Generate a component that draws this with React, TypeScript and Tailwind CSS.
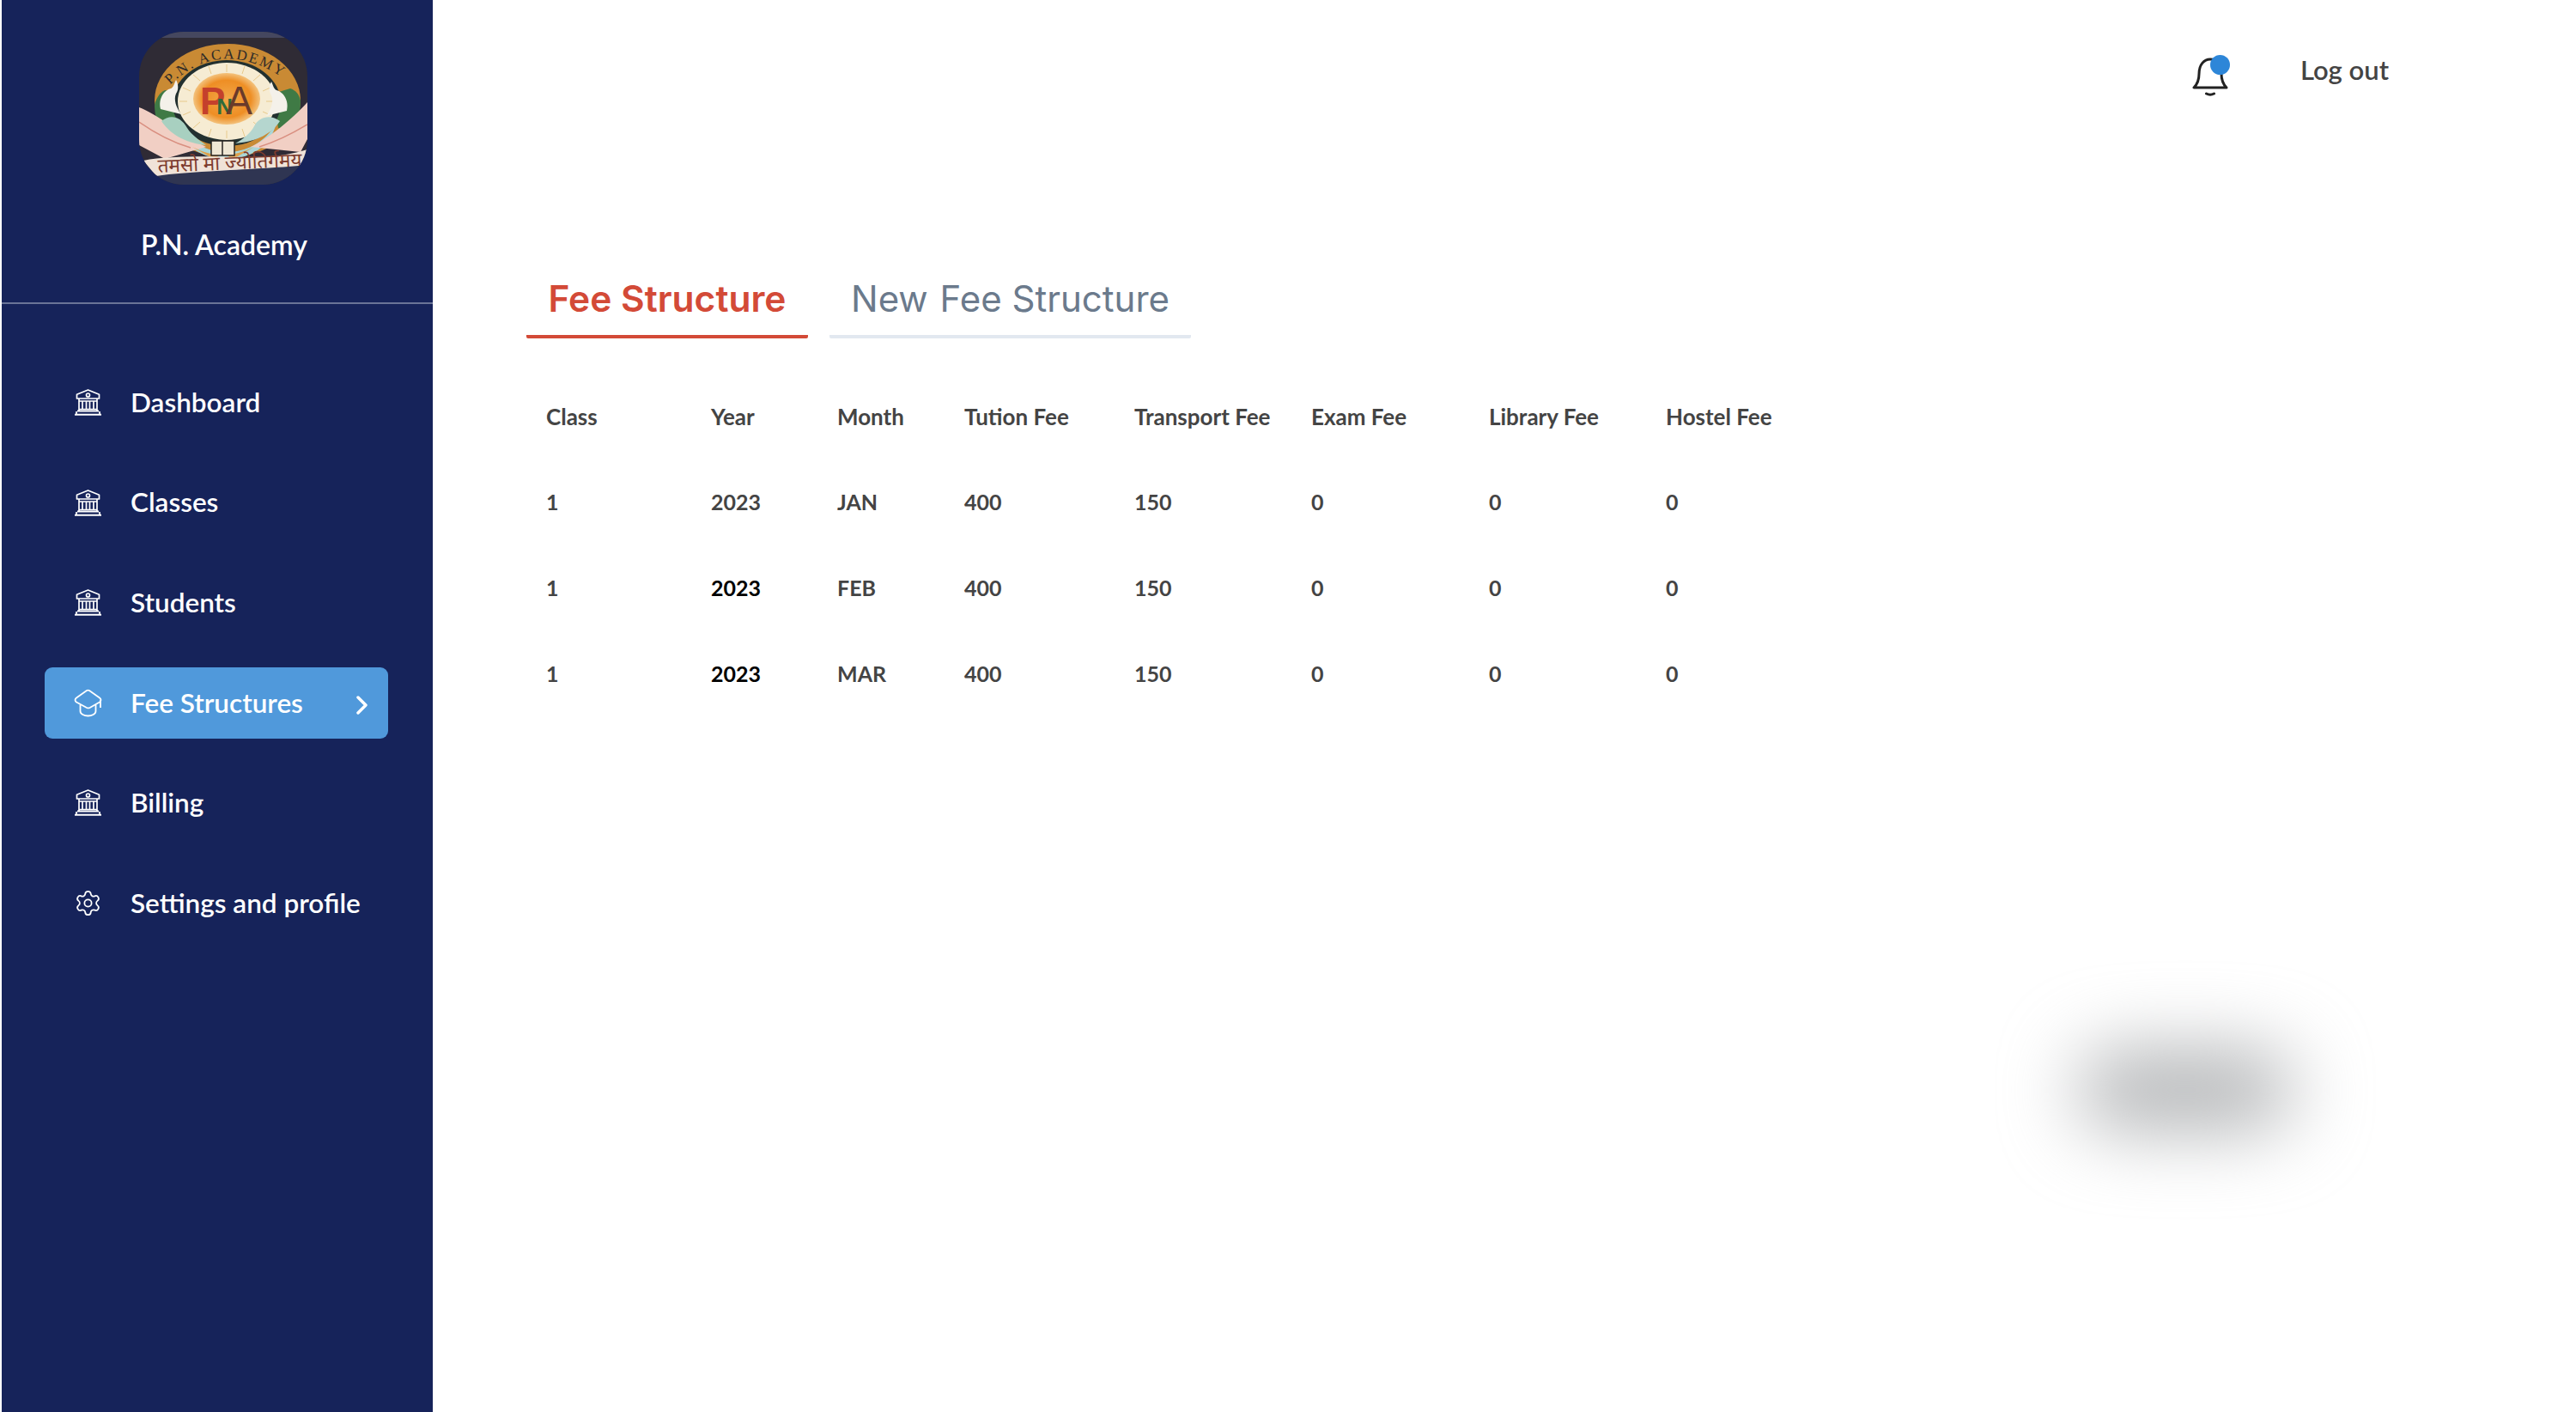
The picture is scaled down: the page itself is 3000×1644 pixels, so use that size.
import { Settings } from "lucide-react";

const navItems = [
  { label: "Dashboard", icon: "bank" },
  { label: "Classes", icon: "bank" },
  { label: "Students", icon: "bank" },
  { label: "Fee Structures", icon: "cap", active: true },
  { label: "Billing", icon: "bank" },
  { label: "Settings and profile", icon: "gear" },
];

const columns = ["Class", "Year", "Month", "Tution Fee", "Transport Fee", "Exam Fee", "Library Fee", "Hostel Fee"];

const rows = [
  ["1", "2023", "JAN", "400", "150", "0", "0", "0"],
  ["1", "2023", "FEB", "400", "150", "0", "0", "0"],
  ["1", "2023", "MAR", "400", "150", "0", "0", "0"],
];

function BankIcon() {
  return (
    <svg width="33" height="31" viewBox="0 0 33 31" fill="none" stroke="white" strokeWidth="1.7" className="shrink-0">
      <path d="M3.5 11V6.2L16.5 1l13 5.2V11z" strokeLinejoin="round" />
      <circle cx="16.5" cy="7" r="2" />
      <path d="M6 11v14M10 14v9M14.5 14v9M18.5 14v9M23 14v9M27 11v14M6 14h21M6 23.5h21" />
      <path d="M4 25.5h25M1 29.8h31" strokeWidth="2" />
      <path d="M3 26v3M30 26v3" />
    </svg>
  );
}

function CapIcon() {
  return (
    <svg width="33" height="33" viewBox="0 0 33 33" fill="none" stroke="white" strokeWidth="1.8" strokeLinejoin="round" className="shrink-0">
      <path d="M15 2 3 10.5c-2 1.6-2 3.4 0 5L15 22c1.2.6 2.4.6 3.6 0L30 15.500c2-1.600 2-3.400 0-5L18 2c-1-.6-2-.6-3 0z" />
      <path d="M7.500 18.500v7.500c0 3.500 4.500 5.500 9 5.500s9-2 9-5.500v-7.500" />
      <path d="M31 13v9" />
    </svg>
  );
}

function BellIcon() {
  return (
    <svg width="42" height="46" viewBox="0 0 42 46" fill="none" stroke="#222" strokeWidth="3" strokeLinecap="round" className="mt-1 shrink-0">
      <path d="M2 36h38c-4-4-6-8-6-16C34 9 28 3 21 3S8 9 8 20c0 8-2 12-6 16z" strokeLinejoin="round" />
      <path d="M16.500 43c3 1.600 6 1.600 9 0" />
    </svg>
  );
}

function Logo() {
  return (
    <svg width="196" height="178" viewBox="0 0 196 178" className="block" style={{ fontFamily: "'Liberation Serif', serif" }}>
      <defs>
        <clipPath id="logo-clip">
          <rect width="196" height="178" rx="52" ry="52" />
        </clipPath>
        <radialGradient id="sun" cx="50%" cy="50%" r="50%">
          <stop offset="0%" stopColor="#f2a84a" />
          <stop offset="72%" stopColor="#ee8e24" />
          <stop offset="100%" stopColor="#f3c27d" />
        </radialGradient>
        <path id="arc-text" d="M36 62 Q 100 0 182 64" />
      </defs>
      <g clipPath="url(#logo-clip)">
        <rect width="196" height="178" fill="#2f2b35" />
        <rect width="196" height="7" fill="#45475f" />
        <rect y="150" width="196" height="28" fill="#2f3552" />
        <ellipse cx="103" cy="80" rx="85" ry="66" fill="#c98a34" />
        <path d="M18 85c2-8 6-14 12-17l22 4-8 40-16 10c-6-10-10-24-10-37z" fill="#3f7a45" />
        <path d="M188 80c-2-8-6-12-12-14l-20 6 6 40 16 8c6-10 10-24 10-40z" fill="#3f7a45" />
        <text fontSize="17" fill="#2f2b28" letterSpacing="2.200">
          <textPath href="#arc-text">P.N. ACADEMY</textPath>
        </text>
        <ellipse cx="102" cy="83" rx="63" ry="50" fill="#22302f" />
        <path d="M44 106c14 24 36 34 58 34s44-10 58-34c-8 30-32 42-58 42s-50-12-58-42z" fill="#a9d6d8" />
        <ellipse cx="102" cy="81" rx="57" ry="45" fill="#f6ecd3" />
        <g stroke="#e8c98b" strokeWidth="1">
          <path d="M102 38v9M102 115v9M47 81h9M148 81h9M63 50l8 7M141 50l-8 7M63 112l8-7M141 112l-8-7M81 40l3 9M123 40l-3 9M81 122l3-9M123 122l-3-9M51 65l9 4M153 65l-9 4M51 97l9-4M153 97l-9-4" />
        </g>
        <ellipse cx="102" cy="78" rx="39" ry="30" fill="url(#sun)" />
        <text x="71" y="96" fontSize="44" fontWeight="700" style={{ fontFamily: "'Liberation Sans', sans-serif" }}>
          <tspan fill="#c4402c">P</tspan>
          <tspan dx="-10" fontSize="26" fill="#2f6b3a">N</tspan>
          <tspan dx="-8" fontSize="46" fontWeight="400" fill="#6a3a2a">A</tspan>
        </text>
        <path d="M0 88C20 95 50 120 78 134L30 148 0 132z" fill="#f1cfc4" />
        <path d="M196 82C180 100 150 125 130 134L188 140 196 125z" fill="#f1cfc4" />
        <path d="M0 105c20 14 40 24 60 30" stroke="#d98f80" strokeWidth="1.500" fill="none" />
        <path d="M196 108c-20 12-36 20-56 26" stroke="#d98f80" strokeWidth="1.500" fill="none" />
        <path d="M25 90c-3-12 4-22 12-24 3-1 4-6 6-10 3 5 3 12 0 16-3 7 0 16 6 24z" fill="#f4f1ea" />
        <path d="M172 92c3-12-4-22-12-24-3-1-4-6-6-10-3 5-3 12 0 16 3 7 0 16-6 24z" fill="#f4f1ea" />
        <path d="M26 104c10-8 22-6 30 8 5 8 14 14 22 20-20-2-40-10-52-28z" fill="#a8d0c0" />
        <path d="M164 104c-10-8-24-6-30 6-4 8-14 16-22 20 20-2 40-8 52-26z" fill="#b5d6cf" />
        <path d="M62 134c12 6 22 9 32 9l-6 6zM134 134c-12 6-24 9-32 9l6 6z" fill="#dfa24d" />
        <path d="M84 127h13v17H84zM97 127h14v17H97z" fill="#efe7d4" stroke="#262320" strokeWidth="1.500" />
        <path d="M5 150C40 143 100 146 130 146S180 142 196 137V155C150 160 60 162 20 168z" fill="#f0e3d8" />
        <text x="22" y="164" fontSize="22.500" fill="#7d3b2e" transform="rotate(-2.500 22 164)" style={{ fontFamily: "'Noto Sans', 'Noto Sans CJK SC', sans-serif" }}>तमसो मा ज्योतिर्गमय</text>
      </g>
    </svg>
  );
}

function NavIcon({ name }: { name: string }) {
  if (name === "cap") return <CapIcon />;
  if (name === "gear") return <Settings size={33} strokeWidth={1.3} color="white" className="shrink-0" />;
  return <BankIcon />;
}

export default function App() {
  return (
    <div className="relative flex h-[1644px] w-[3000px] overflow-hidden bg-white font-['Lato',sans-serif]">
      <aside className="ml-[2px] flex w-[502px] shrink-0 flex-col bg-[#16235a] text-white">
        <div className="flex h-[354px] flex-col items-center border-b-2 border-[#6a7497] pt-[37px] pl-[16px]">
          <div className="-ml-[2px]">
            <Logo />
          </div>
          <div className="mt-[52px] text-[32px] leading-[36px] font-semibold">P.N. Academy</div>
        </div>
        <nav className="flex flex-col gap-[33.6px] pt-[73px] pr-[52px] pl-[50px]">
          {navItems.map((item) => (
            <div
              key={item.label}
              className={`flex h-[83px] items-center gap-[33px] rounded-[9px] pl-[34px] text-[31.500px] font-semibold ${item.active ? "bg-[#5099db]" : ""}`}
            >
              <NavIcon name={item.icon} />
              <span className="whitespace-nowrap">{item.label}</span>
              {item.active && (
                <svg width="16" height="22" viewBox="0 0 16 22" fill="none" stroke="white" strokeWidth="3.500" strokeLinecap="round" strokeLinejoin="round" className="mt-[6px] mr-[22px] ml-auto">
                  <path d="M3 2l9 9-9 9" />
                </svg>
              )}
            </div>
          ))}
        </nav>
      </aside>

      <main className="flex-1 pt-[60px]">
        <header className="flex h-[54px] items-center justify-end gap-[84px] pr-[218px]">
          <div className="relative">
            <BellIcon />
            <span className="absolute top-[2px] right-[-2px] h-[23px] w-[23px] rounded-full bg-[#2d86d8]" />
          </div>
          <span className="-mt-3 text-[31px] font-semibold text-[#444]">Log out</span>
        </header>

        <div className="mt-[208px] ml-[109px] flex gap-[25px] font-['Inter',sans-serif] leading-[50px]">
          <button className="h-[72px] w-[328px] rounded-b-[2px] border-b-4 border-[#d34a37] pb-[16px] text-[42.500px] font-semibold text-[#d34a37]">Fee Structure</button>
          <button className="h-[72px] w-[421px] rounded-b-[2px] border-b-4 border-[#e2e8f0] pb-[16px] text-[42px] whitespace-pre text-[#6b7a8c]">New <span className="ml-[2px]">Fee Structure</span></button>
        </div>

        <div className="mt-[41px] ml-[132px] grid grid-cols-[192px_147px_148px_198px_206px_207px_206px_200px] text-[25px] font-bold text-[#444]">
          {columns.map((col) => (
            <div key={col} className="flex h-[100px] items-center text-[26px] whitespace-nowrap">{col}</div>
          ))}
          {rows.map((row, r) =>
            row.map((cell, c) => (
              <div key={`${r}-${c}`} className={`flex h-[100px] items-center ${c === 1 && r > 0 ? "text-black" : ""}`}>
                {cell}
              </div>
            ))
          )}
        </div>
      </main>

      <div className="absolute top-[1224px] left-[2420px] h-[90px] w-[250px] rounded-[45px] bg-[#b0b2b4] blur-[44px]" />
    </div>
  );
}
